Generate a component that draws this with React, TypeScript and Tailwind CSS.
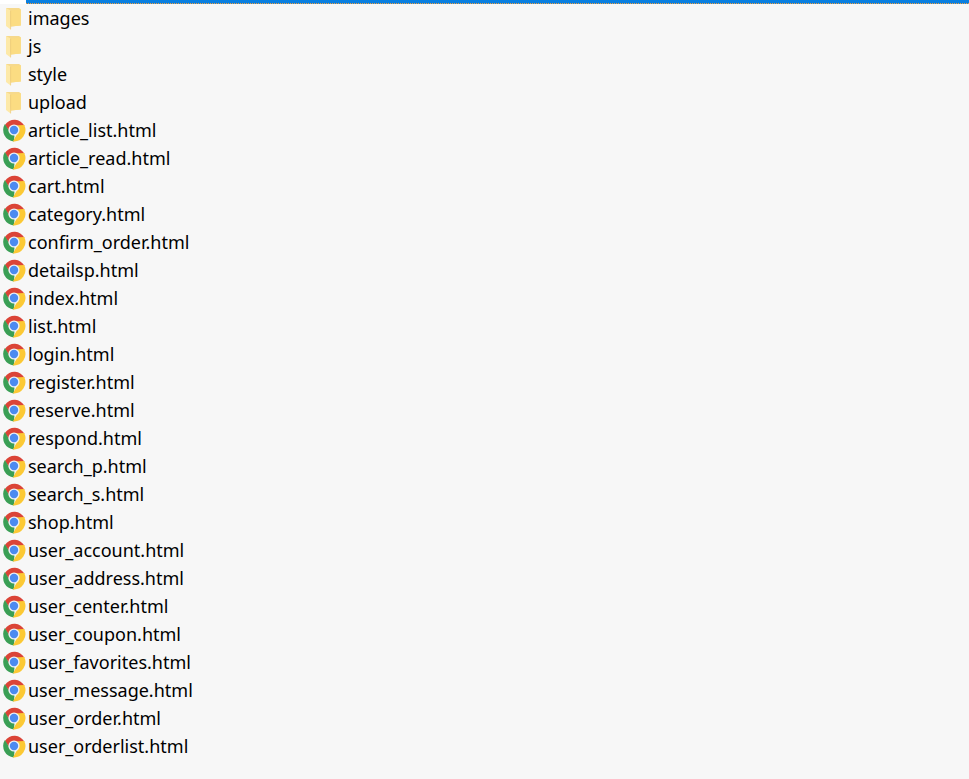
import React from 'react';

const folders = ['images', 'js', 'style', 'upload'];

const files = [
  'article_list.html',
  'article_read.html',
  'cart.html',
  'category.html',
  'confirm_order.html',
  'detailsp.html',
  'index.html',
  'list.html',
  'login.html',
  'register.html',
  'reserve.html',
  'respond.html',
  'search_p.html',
  'search_s.html',
  'shop.html',
  'user_account.html',
  'user_address.html',
  'user_center.html',
  'user_coupon.html',
  'user_favorites.html',
  'user_message.html',
  'user_order.html',
  'user_orderlist.html',
];

const FolderIcon = () => (
  <svg width="24" height="24" viewBox="0 0 24 24" className="shrink-0">
    <path d="M4 2h13l1.8 1.2V19.5L9 20.5z" fill="#f6d98c" />
    <path d="M4 2l4.6 2.4V23.5L4 20z" fill="#fde9a8" />
    <path d="M8.6 4.4l10.2-1.2V19.5L8.6 20.5z" fill="#fbdc82" />
    <path d="M8.6 4.6v18.8" stroke="#edc873" strokeWidth="0.7" />
  </svg>
);

const ChromeIcon = () => (
  <svg width="24" height="24" viewBox="0 0 24 24" className="shrink-0">
    <path d="M2.9 7A11.4 11.4 0 0 1 22.6 8L12 8 7.6 14z" fill="#db4437" />
    <path d="M11.8 23.4A11.4 11.4 0 0 1 2.9 6L8 14.5 12.5 17.5z" fill="#3a9f55" />
    <path d="M22.2 7A11.4 11.4 0 0 1 10.8 23.4L16 14.5 12 7.5z" fill="#fcc934" />
    <circle cx="12" cy="12" r="5.6" fill="#eef1f5" />
    <circle cx="12" cy="12" r="4.2" fill="#4c8bf0" />
  </svg>
);

const Row = ({ name, folder }: { name: string; folder?: boolean }) => (
  <div className="flex h-[28px] items-center pl-[2px]">
    {folder ? <FolderIcon /> : <ChromeIcon />}
    <span className="ml-[2px] text-[18px] leading-none text-black">{name}</span>
  </div>
);

export default function App() {
  return (
    <div
      className="h-[779px] overflow-hidden bg-[#f7f7f7]"
      style={{ fontFamily: '"Noto Sans", "Open Sans", sans-serif' }}
    >
      <div className="flex h-[4px]">
        <div className="w-[26px] bg-white" />
        <div className="flex-1 border-b border-dotted border-[#f0a040] bg-[#0a7fe0]" />
      </div>
      {folders.map((name) => (
        <Row key={name} name={name} folder />
      ))}
      {files.map((name) => (
        <Row key={name} name={name} />
      ))}
    </div>
  );
}
